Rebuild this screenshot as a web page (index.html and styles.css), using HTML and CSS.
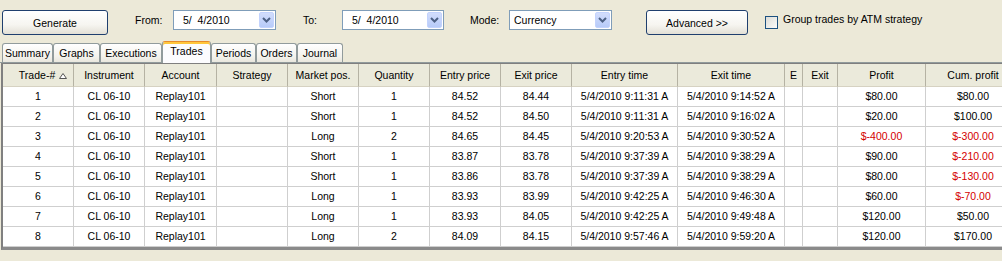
FILE: index.html
```html
<!DOCTYPE html>
<html lang="en">
<head>
  <meta charset="UTF-8">
  <title>Trade performance</title>
  <link rel="stylesheet" href="styles.css">
</head>
<body>
  <div class="toolbar">
    <button class="btn btn-generate">Generate</button>
    <span class="lbl lbl-from">From:</span>
    <div class="combo combo-date combo-from">
      <span class="combo-text">5/&nbsp; 4/2010</span>
      <span class="combo-arrow"><svg width="9" height="6" viewBox="0 0 9 6"><path d="M1 1 L4.5 4.5 L8 1" fill="none" stroke="#4d6185" stroke-width="2"/></svg></span>
    </div>
    <span class="lbl lbl-to">To:</span>
    <div class="combo combo-date combo-to">
      <span class="combo-text">5/&nbsp; 4/2010</span>
      <span class="combo-arrow"><svg width="9" height="6" viewBox="0 0 9 6"><path d="M1 1 L4.5 4.5 L8 1" fill="none" stroke="#4d6185" stroke-width="2"/></svg></span>
    </div>
    <span class="lbl lbl-mode">Mode:</span>
    <div class="combo combo-mode">
      <span class="combo-text">Currency</span>
      <span class="combo-arrow"><svg width="9" height="6" viewBox="0 0 9 6"><path d="M1 1 L4.5 4.5 L8 1" fill="none" stroke="#4d6185" stroke-width="2"/></svg></span>
    </div>
    <button class="btn btn-advanced">Advanced &gt;&gt;</button>
    <span class="check"></span>
    <span class="check-label">Group trades by ATM strategy</span>
  </div>

  <div class="tabs">
    <div class="tab" style="width:51px">Summary</div>
    <div class="tab" style="width:47px">Graphs</div>
    <div class="tab" style="width:62px">Executions</div>
    <div class="tab active" style="width:49px">Trades</div>
    <div class="tab" style="width:45px">Periods</div>
    <div class="tab" style="width:41px">Orders</div>
    <div class="tab" style="width:46px">Journal</div>
  </div>

  <div class="grid">
    <div class="row head">
      <div class="cell first">Trade-# <svg class="sort" width="8" height="6" viewBox="0 0 8 6"><path d="M4 0.5 L7.5 5.5 L0.5 5.5 Z" fill="#fff" stroke="#555" stroke-width="1"/></svg></div>
      <div class="cell">Instrument</div>
      <div class="cell">Account</div>
      <div class="cell">Strategy</div>
      <div class="cell">Market pos.</div>
      <div class="cell">Quantity</div>
      <div class="cell">Entry price</div>
      <div class="cell">Exit price</div>
      <div class="cell">Entry time</div>
      <div class="cell">Exit time</div>
      <div class="cell">E</div>
      <div class="cell">Exit</div>
      <div class="cell">Profit</div>
      <div class="cell">Cum. profit</div>
    </div>
    <div id="rows"></div>
  </div>

  <script>
    const trades = [
      [1, 'Short', 1, '84.52', '84.44', '9:11:31', '9:14:52', 80, 80],
      [2, 'Short', 1, '84.52', '84.50', '9:11:31', '9:16:02', 20, 100],
      [3, 'Long', 2, '84.65', '84.45', '9:20:53', '9:30:52', -400, -300],
      [4, 'Short', 1, '83.87', '83.78', '9:37:39', '9:38:29', 90, -210],
      [5, 'Short', 1, '83.86', '83.78', '9:37:39', '9:38:29', 80, -130],
      [6, 'Long', 1, '83.93', '83.99', '9:42:25', '9:46:30', 60, -70],
      [7, 'Long', 1, '83.93', '84.05', '9:42:25', '9:49:48', 120, 50],
      [8, 'Long', 2, '84.09', '84.15', '9:57:46', '9:59:20', 120, 170]
    ];

    function money(v) {
      const txt = v < 0 ? '$-' + Math.abs(v).toFixed(2) : '$' + v.toFixed(2);
      return `<div class="cell${v < 0 ? ' neg' : ''}">${txt}</div>`;
    }

    let html = '';
    for (let t of trades) {
      html += `<div class="row">
        <div class="cell">${t[0]}</div>
        <div class="cell">CL 06-10</div>
        <div class="cell">Replay101</div>
        <div class="cell"></div>
        <div class="cell">${t[1]}</div>
        <div class="cell">${t[2]}</div>
        <div class="cell">${t[3]}</div>
        <div class="cell">${t[4]}</div>
        <div class="cell">5/4/2010 ${t[5]} A</div>
        <div class="cell">5/4/2010 ${t[6]} A</div>
        <div class="cell"></div>
        <div class="cell"></div>
        ${money(t[7])}
        ${money(t[8])}
      </div>`;
    }
    document.getElementById('rows').innerHTML = html;
  </script>
</body>
</html>
```

FILE: styles.css
```css
body {
  margin: 0;
  width: 1002px;
  height: 261px;
  overflow: hidden;
  background: #ece9d8;
  font-family: 'Liberation Sans', Arial, sans-serif;
  font-size: 10.5px;
  color: #000;
}
.toolbar {
  display: flex;
  align-items: flex-start;
  height: 40px;
  padding-top: 10px;
  box-sizing: border-box;
}
.btn {
  height: 25px;
  padding: 0;
  border: 1px solid #1f3f6e;
  border-radius: 3px;
  background: linear-gradient(#ffffff, #f6f5f0 60%, #e3e0d6);
  font: inherit;
  color: #000;
  box-sizing: border-box;
}
.btn-generate { margin-left: 2px; width: 106px; }
.btn-advanced { margin-left: 34px; width: 102px; }
.lbl {
  line-height: 20px;
  white-space: nowrap;
}
.lbl-from { margin-left: 27px; width: 38px; }
.lbl-to { margin-left: 27px; width: 39px; }
.lbl-mode { margin-left: 26px; width: 39px; }
.combo {
  display: flex;
  align-items: center;
  height: 20px;
  border: 1px solid #7f9db9;
  background: #fff;
  box-sizing: border-box;
}
.combo-from { width: 103px; }
.combo-to { width: 102px; }
.combo-mode { width: 103px; }
.combo-text {
  flex: 1;
  white-space: nowrap;
}
.combo-date .combo-text { padding-left: 9px; }
.combo-mode .combo-text { padding-left: 4px; }
.combo-arrow {
  display: flex;
  align-items: center;
  justify-content: center;
  width: 15px;
  height: 16px;
  margin-right: 1px;
  border: 1px solid #c3d3fd;
  border-radius: 2px;
  background: linear-gradient(#d2ddfc, #b7cbf9);
  box-sizing: border-box;
}
.check {
  width: 13px;
  height: 13px;
  margin: 6px 0 0 17px;
  border: 1px solid #1c5180;
  background: linear-gradient(135deg, #dcdcd7, #fbfbf9);
  box-sizing: border-box;
}
.check-label {
  margin-left: 5px;
  line-height: 19px;
  white-space: nowrap;
}
.tabs {
  display: flex;
  align-items: flex-end;
  height: 22px;
  padding-left: 2px;
  border-bottom: 1px solid #919b9c;
}
.tab {
  height: 19px;
  line-height: 18px;
  text-align: center;
  white-space: nowrap;
  border: 1px solid #919b9c;
  border-bottom: none;
  border-radius: 3px 3px 0 0;
  background: linear-gradient(#ffffff, #f3f2ec 70%, #e9e7de);
  box-sizing: border-box;
}
.tab.active {
  height: 22px;
  line-height: 18px;
  margin-bottom: -1px;
  border-top: 1px solid #e68b2c;
  box-shadow: inset 0 2px #ffc73c;
  background: #fcfcfe;
}
.grid {
  width: 1030px;
  margin-left: 1px;
  border-top: 1px solid #7f7f7f;
  border-left: 2px solid #808080;
  border-bottom: 3px solid #8a8a8a;
  background: #fff;
}
.row {
  display: grid;
  grid-template-columns: 71px 71px 72px 71px 71px 71px 71px 71px 106px 107px 18px 35px 88px 95px;
  height: 20px;
}
.cell {
  border-right: 1px solid #cfcfcf;
  border-bottom: 1px solid #cfcfcf;
  text-align: center;
  line-height: 19px;
  white-space: nowrap;
  overflow: hidden;
}
.head {
  height: 23px;
  background: #ebeadb;
}
.head .cell {
  line-height: 22px;
  border-right-color: #b5b2a3;
  border-bottom-color: #d6d2c2;
}
.head .first { padding-left: 10px; }
.sort { vertical-align: 0; margin-left: 1px; }
.neg { color: #d40000; }
```
